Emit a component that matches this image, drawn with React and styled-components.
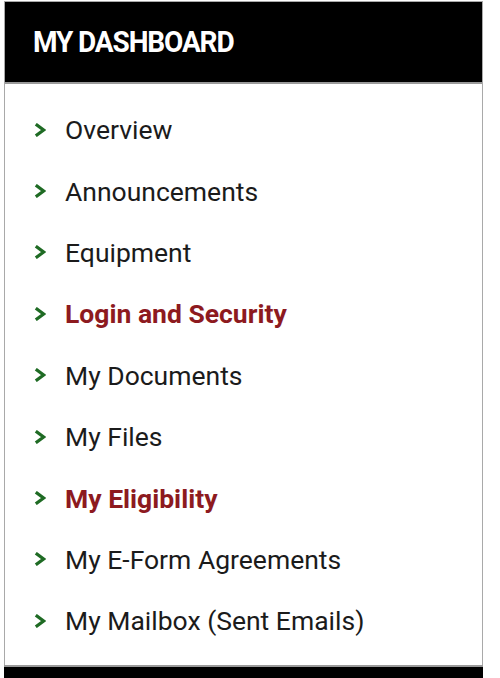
import React from "react";
import styled, { createGlobalStyle } from "styled-components";

const Global = createGlobalStyle`
  html, body { margin: 0; padding: 0; background: #ffffff; }
  body { font-family: Roboto, "Noto Sans", sans-serif; }
`;

const Page = styled.div`
  padding: 1px 17px 0 4px;
  height: 677px;
  overflow: hidden;
`;

const Panel = styled.nav`
  border: 1px solid #a9a9a9;
  border-bottom: none;
  width: 477px;
  background: #fff;
`;

const Header = styled.div`
  background: #000;
  height: 80px;
  display: flex;
  align-items: center;
  padding-left: 28px;
  border-bottom: 2px solid #9a9a9a;
`;

const Title = styled.h2`
  margin: 0;
  color: #fff;
  font-family: Roboto, sans-serif;
  font-weight: 700;
  font-size: 29.5px;
  letter-spacing: -1.2px;
  transform: scaleX(0.95);
  transform-origin: left center;
  white-space: nowrap;
`;

const List = styled.ul`
  list-style: none;
  margin: 0;
  padding: 15px 0 13px 0;
  display: flex;
  flex-direction: column;
`;

const Item = styled.li`
  height: 61.4px;
  display: flex;
  align-items: center;
  padding-left: 29px;
  gap: 19px;
`;

const Label = styled.a`
  font-family: Roboto, sans-serif;
  font-size: 26.5px;
  font-weight: ${(p) => (p.$active ? 700 : 400)};
  color: ${(p) => (p.$active ? "#8d1a1f" : "#1b1b1b")};
  text-decoration: none;
  white-space: nowrap;
`;

const Footer = styled.div`
  height: 11px;
  background: #000;
  border-top: 2px solid #9a9a9a;
`;

const Chevron = () => (
  <svg width="12" height="14" viewBox="0 0 12 14" aria-hidden="true" style={{ flexShrink: 0 }}>
    <path d="M1.8 1.2 L9.6 7 L1.8 12.8" fill="none" stroke="#1f6b24" strokeWidth="3.2" strokeLinejoin="miter" />
  </svg>
);

const items = [
  { label: "Overview" },
  { label: "Announcements" },
  { label: "Equipment" },
  { label: "Login and Security", active: true },
  { label: "My Documents" },
  { label: "My Files" },
  { label: "My Eligibility", active: true },
  { label: "My E-Form Agreements" },
  { label: "My Mailbox (Sent Emails)" },
];

export default function App() {
  return (
    <>
      <Global />
      <Page>
        <Panel>
          <Header>
            <Title>MY DASHBOARD</Title>
          </Header>
          <List>
            {items.map((it) => (
              <Item key={it.label}>
                <Chevron />
                <Label href="#" $active={it.active}>{it.label}</Label>
              </Item>
            ))}
          </List>
        </Panel>
        <Footer />
      </Page>
    </>
  );
}
